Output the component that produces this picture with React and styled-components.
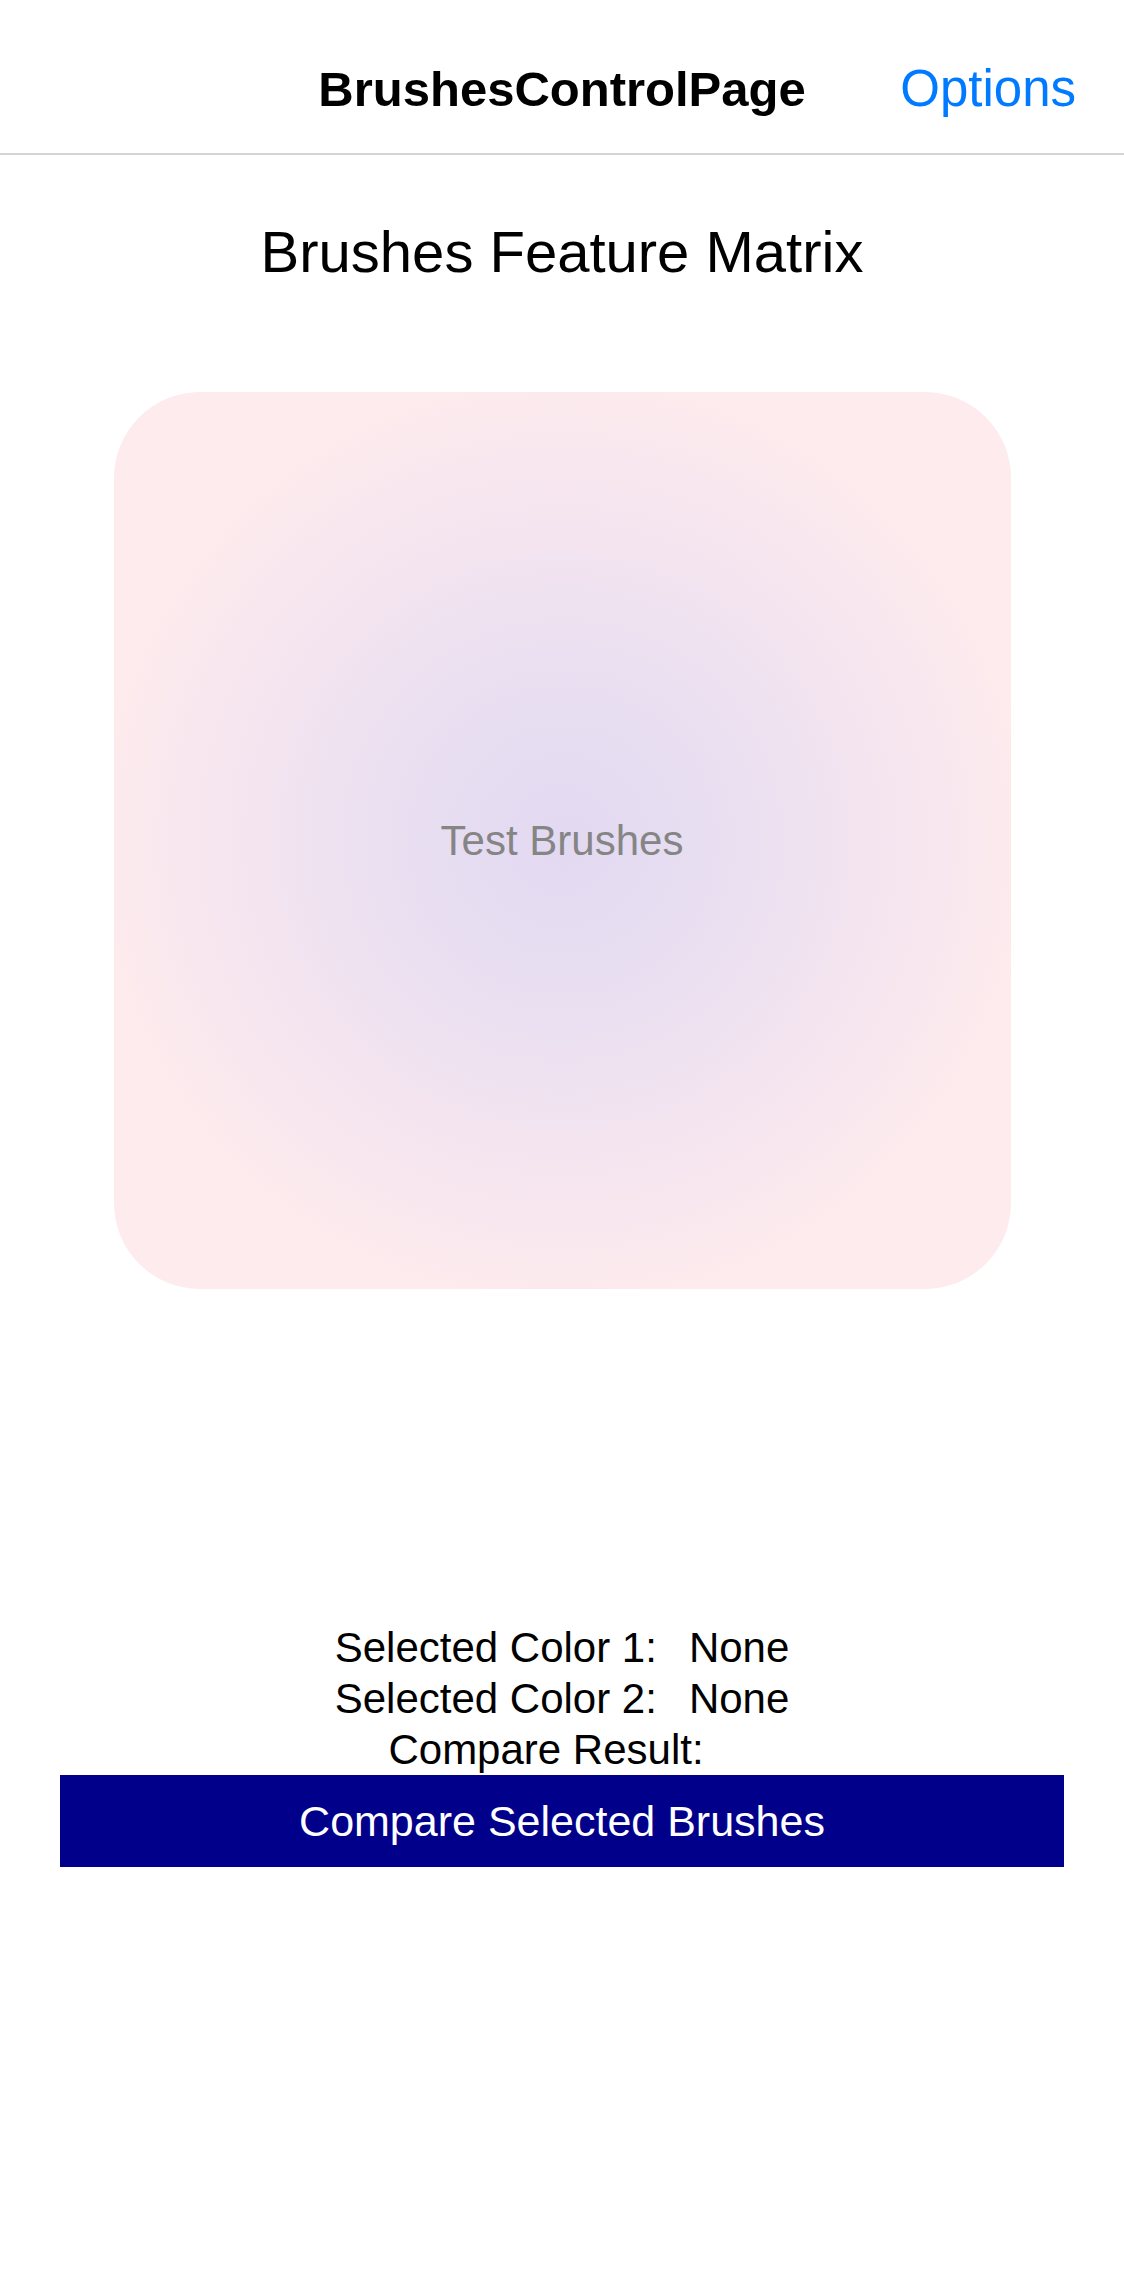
import styled, { createGlobalStyle } from "styled-components";

const GlobalStyle = createGlobalStyle`
  html, body {
    margin: 0;
    padding: 0;
    background: #ffffff;
    font-family: "Liberation Sans", Arial, sans-serif;
  }
`;

const InfoRow = ({ label, value }) => (
  <Row>
    <span>{label}</span>
    <span>{value}</span>
  </Row>
);

const App = () => {
  return (
    <Page>
      <GlobalStyle />
      <NavBar>
        <span />
        <NavTitle>BrushesControlPage</NavTitle>
        <NavAction>Options</NavAction>
      </NavBar>
      <Content>
        <Heading>Brushes Feature Matrix</Heading>
        <BrushBox>Test Brushes</BrushBox>
        <Info>
          <InfoRow label="Selected Color 1:" value="None" />
          <InfoRow label="Selected Color 2:" value="None" />
          <InfoRow label="Compare Result:" value="" />
        </Info>
        <CompareButton>Compare Selected Brushes</CompareButton>
      </Content>
    </Page>
  );
};

export default App;

const Page = styled.div`
  width: 1124px;
  min-height: 2286px;
  background: #ffffff;
`;

const NavBar = styled.header`
  height: 155px;
  display: grid;
  grid-template-columns: 1fr auto 1fr;
  align-items: center;
  padding-top: 24px;
  box-sizing: border-box;
  border-bottom: 2px solid #d4d4d4;
`;

const NavTitle = styled.div`
  font-size: 49px;
  font-weight: 700;
  color: #000;
`;

const NavAction = styled.div`
  justify-self: end;
  padding-right: 48px;
  font-size: 51px;
  color: #007aff;
`;

const Content = styled.main`
  display: flex;
  flex-direction: column;
  align-items: center;
`;

const Heading = styled.h1`
  margin: 62px 0 0;
  font-size: 58px;
  line-height: 70px;
  font-weight: 400;
  color: #000;
`;

const BrushBox = styled.div`
  margin-top: 105px;
  width: 897px;
  height: 897px;
  border-radius: 86px;
  display: flex;
  align-items: center;
  justify-content: center;
  font-size: 42px;
  color: #858585;
  background: radial-gradient(
    circle at 50% 50%,
    #e2d9f2 0px,
    #ebe0f1 190px,
    #f5e5ef 330px,
    #fdebed 470px
  );
`;

const Info = styled.div`
  margin-top: 333px;
  display: flex;
  flex-direction: column;
  align-items: center;
`;

const Row = styled.div`
  display: flex;
  justify-content: center;
  gap: 32px;
  font-size: 42px;
  line-height: 51px;
  color: #000;
`;

const CompareButton = styled.button`
  align-self: stretch;
  margin: 0 60px;
  height: 92px;
  border: none;
  background: #00008b;
  color: #ffffff;
  font-family: "Liberation Sans", Arial, sans-serif;
  font-size: 43px;
  padding: 0;
`;
